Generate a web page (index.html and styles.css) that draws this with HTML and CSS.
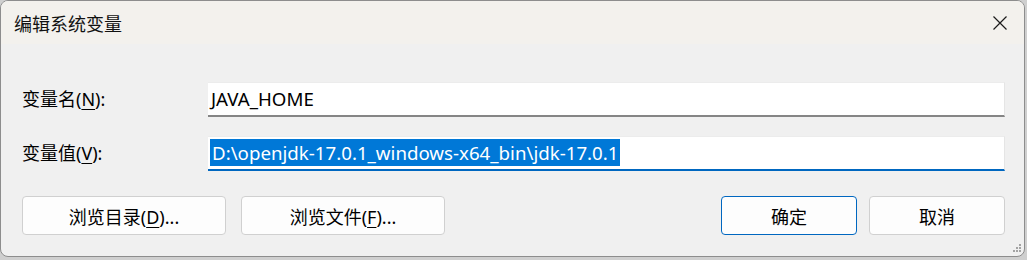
FILE: index.html
```html
<!DOCTYPE html>
<html lang="zh-CN">
<head>
<meta charset="utf-8">
<title>编辑系统变量</title>
<link rel="stylesheet" href="styles.css">
</head>
<body>
<div class="window">
  <div class="titlebar">
    <span class="title">编辑系统变量</span>
    <span class="close">
      <svg width="16" height="16" viewBox="0 0 16 16"><path d="M1.5 1.5 L14.5 14.5 M14.5 1.5 L1.5 14.5" stroke="#1b1b1b" stroke-width="1.2" fill="none"/></svg>
    </span>
  </div>
  <div class="content">
    <div class="fields">
      <label class="label">变量名(<u>N</u>):</label>
      <div class="input">JAVA_HOME</div>
      <label class="label">变量值(<u>V</u>):</label>
      <div class="input focused"><span class="sel">D:\openjdk-17.0.1_windows-x64_bin\jdk-17.0.1</span></div>
    </div>
    <div class="buttons">
      <div class="group">
        <button class="btn wide">浏览目录(<u>D</u>)...</button>
        <button class="btn wide">浏览文件(<u>F</u>)...</button>
      </div>
      <div class="group tight">
        <button class="btn narrow default">确定</button>
        <button class="btn narrow">取消</button>
      </div>
    </div>
  </div>
  <div class="grip">
    <svg width="12" height="12" viewBox="0 0 12 12" fill="#a3a3a3">
      <rect x="9" y="1" width="2" height="2"/>
      <rect x="6" y="4" width="2" height="2"/><rect x="9" y="4" width="2" height="2"/>
      <rect x="3" y="7" width="2" height="2"/><rect x="6" y="7" width="2" height="2"/><rect x="9" y="7" width="2" height="2"/>
    </svg>
  </div>
</div>
</body>
</html>
```

FILE: styles.css
```css
html, body {
  margin: 0;
  padding: 0;
}
body {
  width: 1027px;
  height: 260px;
  background: #cfcfcf;
  font-family: "Noto Sans", "Noto Sans CJK SC", sans-serif;
  font-size: 18px;
  color: #000;
  overflow: hidden;
}
.window {
  position: relative;
  width: 1025px;
  height: 257px;
  box-sizing: border-box;
  border: 1px solid #8d8d8d;
  border-radius: 8px;
  background: #f0f0f0;
  overflow: hidden;
  display: flex;
  flex-direction: column;
}
.titlebar {
  height: 43px;
  flex: none;
  background: #f3f1ed;
  display: flex;
  align-items: center;
  padding-left: 13px;
}
.title {
  font-family: "Noto Sans CJK SC", sans-serif;
  font-size: 18px;
  color: #111;
}
.close {
  margin-left: auto;
  width: 46px;
  display: flex;
  justify-content: center;
  margin-right: 1px;
}
.close svg { display: block; }
.content {
  padding: 38px 19px 0 20px;
}
.fields {
  display: grid;
  grid-template-columns: 187px 1fr;
  grid-auto-rows: 35px;
  row-gap: 19px;
  align-items: center;
}
.label {
  font-family: "Noto Sans", "Noto Sans CJK SC", sans-serif;
  line-height: 35px;
  padding-left: 1px;
}
.label u, .btn u {
  text-decoration-thickness: 1px;
  text-underline-offset: 3px;
}
.input {
  height: 35px;
  box-sizing: border-box;
  background: #fff;
  border-right: 1px solid #e5e5e5;
  border-top: 1px solid #ececec;
  border-bottom: 2px solid #858585;
  padding-left: 3px;
  font-size: 18.7px;
  line-height: 31px;
  white-space: nowrap;
}
.input.focused {
  border-bottom: 2px solid #0067c0;
}
.sel {
  background: #0078d7;
  color: #fff;
  padding: 1px 2px;
  margin-left: -1px;
}
.buttons {
  margin-top: 25px;
  display: flex;
  justify-content: space-between;
  padding-left: 1px;
}
.group {
  display: flex;
  gap: 15px;
}
.group.tight { gap: 12px; }
.btn {
  height: 39px;
  box-sizing: border-box;
  border: 1px solid #d0d0d0;
  border-radius: 4px;
  background: #fdfdfd;
  font-family: "Noto Sans", "Noto Sans CJK SC", sans-serif;
  font-size: 18px;
  color: #000;
  padding: 0;
}
.btn.wide { width: 204px; }
.btn.narrow { width: 136px; }
.btn.default {
  border-color: #0067c0;
}
.grip {
  position: absolute;
  right: 2px;
  bottom: 1px;
}
.grip svg { display: block; }
```
